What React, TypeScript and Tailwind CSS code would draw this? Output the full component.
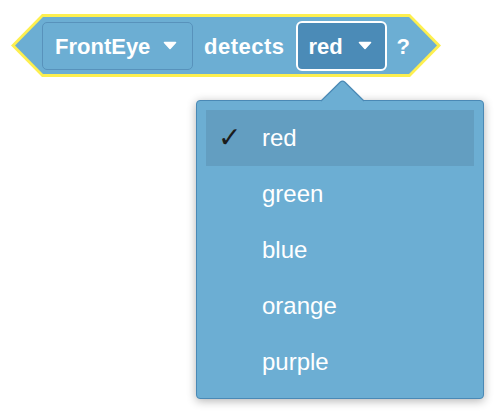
import React from "react";

const Caret = () => (
  <svg width="14" height="9" viewBox="0 0 14 9" className="shrink-0">
    <path d="M1.5 1.5 L12.5 1.5 L7 7.5 Z" fill="#ffffff" stroke="#ffffff" strokeWidth="1.6" strokeLinejoin="round" />
  </svg>
);

const items = ["red", "green", "blue", "orange", "purple"];

export default function App() {
  return (
    <div
      className="relative w-[500px] h-[420px] bg-white overflow-hidden"
      style={{ fontFamily: '"Liberation Sans", Arial, Helvetica, sans-serif' }}
    >
      <div className="pt-[14px] pl-[11px]">
        <div className="w-[430px] h-[63px] bg-[#fdef4f] p-[3px] [clip-path:polygon(31px_0,calc(100%-31px)_0,100%_50%,calc(100%-31px)_100%,31px_100%,0_50%)]">
          <div className="w-full h-full bg-[#6caed3] flex items-center pl-[28px] [clip-path:polygon(29px_0,calc(100%-29px)_0,calc(100%-1px)_50%,calc(100%-29px)_100%,29px_100%,1px_50%)]">
            <div className="w-[151px] h-[48px] shrink-0 rounded-[5px] border border-[#5892bb] flex items-center pl-[12px] pt-[2px]">
              <span className="text-white font-bold text-[22px] leading-none">FrontEye</span>
              <span className="ml-[13px] mt-[-2px]">
                <Caret />
              </span>
            </div>
            <span className="ml-[11px] text-white font-bold text-[22px] leading-none pt-[2px] tracking-[0.5px]">detects</span>
            <div className="ml-[11px] w-[91px] h-[50px] shrink-0 rounded-[6px] border-2 border-white bg-[#4b8bb7] flex items-center pl-[11px] pt-[2px]">
              <span className="text-white font-bold text-[22px] leading-none">red</span>
              <span className="ml-[15px] mt-[-2px]">
                <Caret />
              </span>
            </div>
            <span className="ml-[10px] text-white font-bold text-[22px] leading-none pt-[2px]">?</span>
          </div>
        </div>
      </div>

      <div className="absolute left-[196px] top-[100px] w-[288px] h-[299px] bg-[#6caed3] border border-[#4a89b5] rounded-[4px] shadow-[0_2px_10px_rgba(0,0,0,0.3)]">
        <svg
          width="45"
          height="24"
          viewBox="0 0 45 24"
          className="absolute left-[123px] top-[-21px]"
        >
          <path d="M1 21 L20 2.2 Q22.5 0 25 2.2 L44 21 L44 24 L1 24 Z" fill="#6caed3" />
          <path d="M1 21 L20 2.2 Q22.5 0 25 2.2 L44 21" fill="none" stroke="#4a89b5" strokeWidth="1.2" />
        </svg>
        <div className="flex flex-col pt-[9px] px-[9px]">
          {items.map((it, i) => (
            <div
              key={it}
              className={`h-[56px] flex items-center ${i === 0 ? "bg-[#639ec1]" : ""}`}
            >
              <div className="w-[56px] pl-[12px] shrink-0 flex items-center">
                {i === 0 ? (
                  <span
                    className="text-[#1c1c1c] text-[28px] leading-none italic"
                    style={{ fontFamily: '"DejaVu Sans", sans-serif' }}
                  >
                    ✓
                  </span>
                ) : null}
              </div>
              <span className="text-white text-[24px] leading-none">{it}</span>
            </div>
          ))}
        </div>
      </div>
    </div>
  );
}
